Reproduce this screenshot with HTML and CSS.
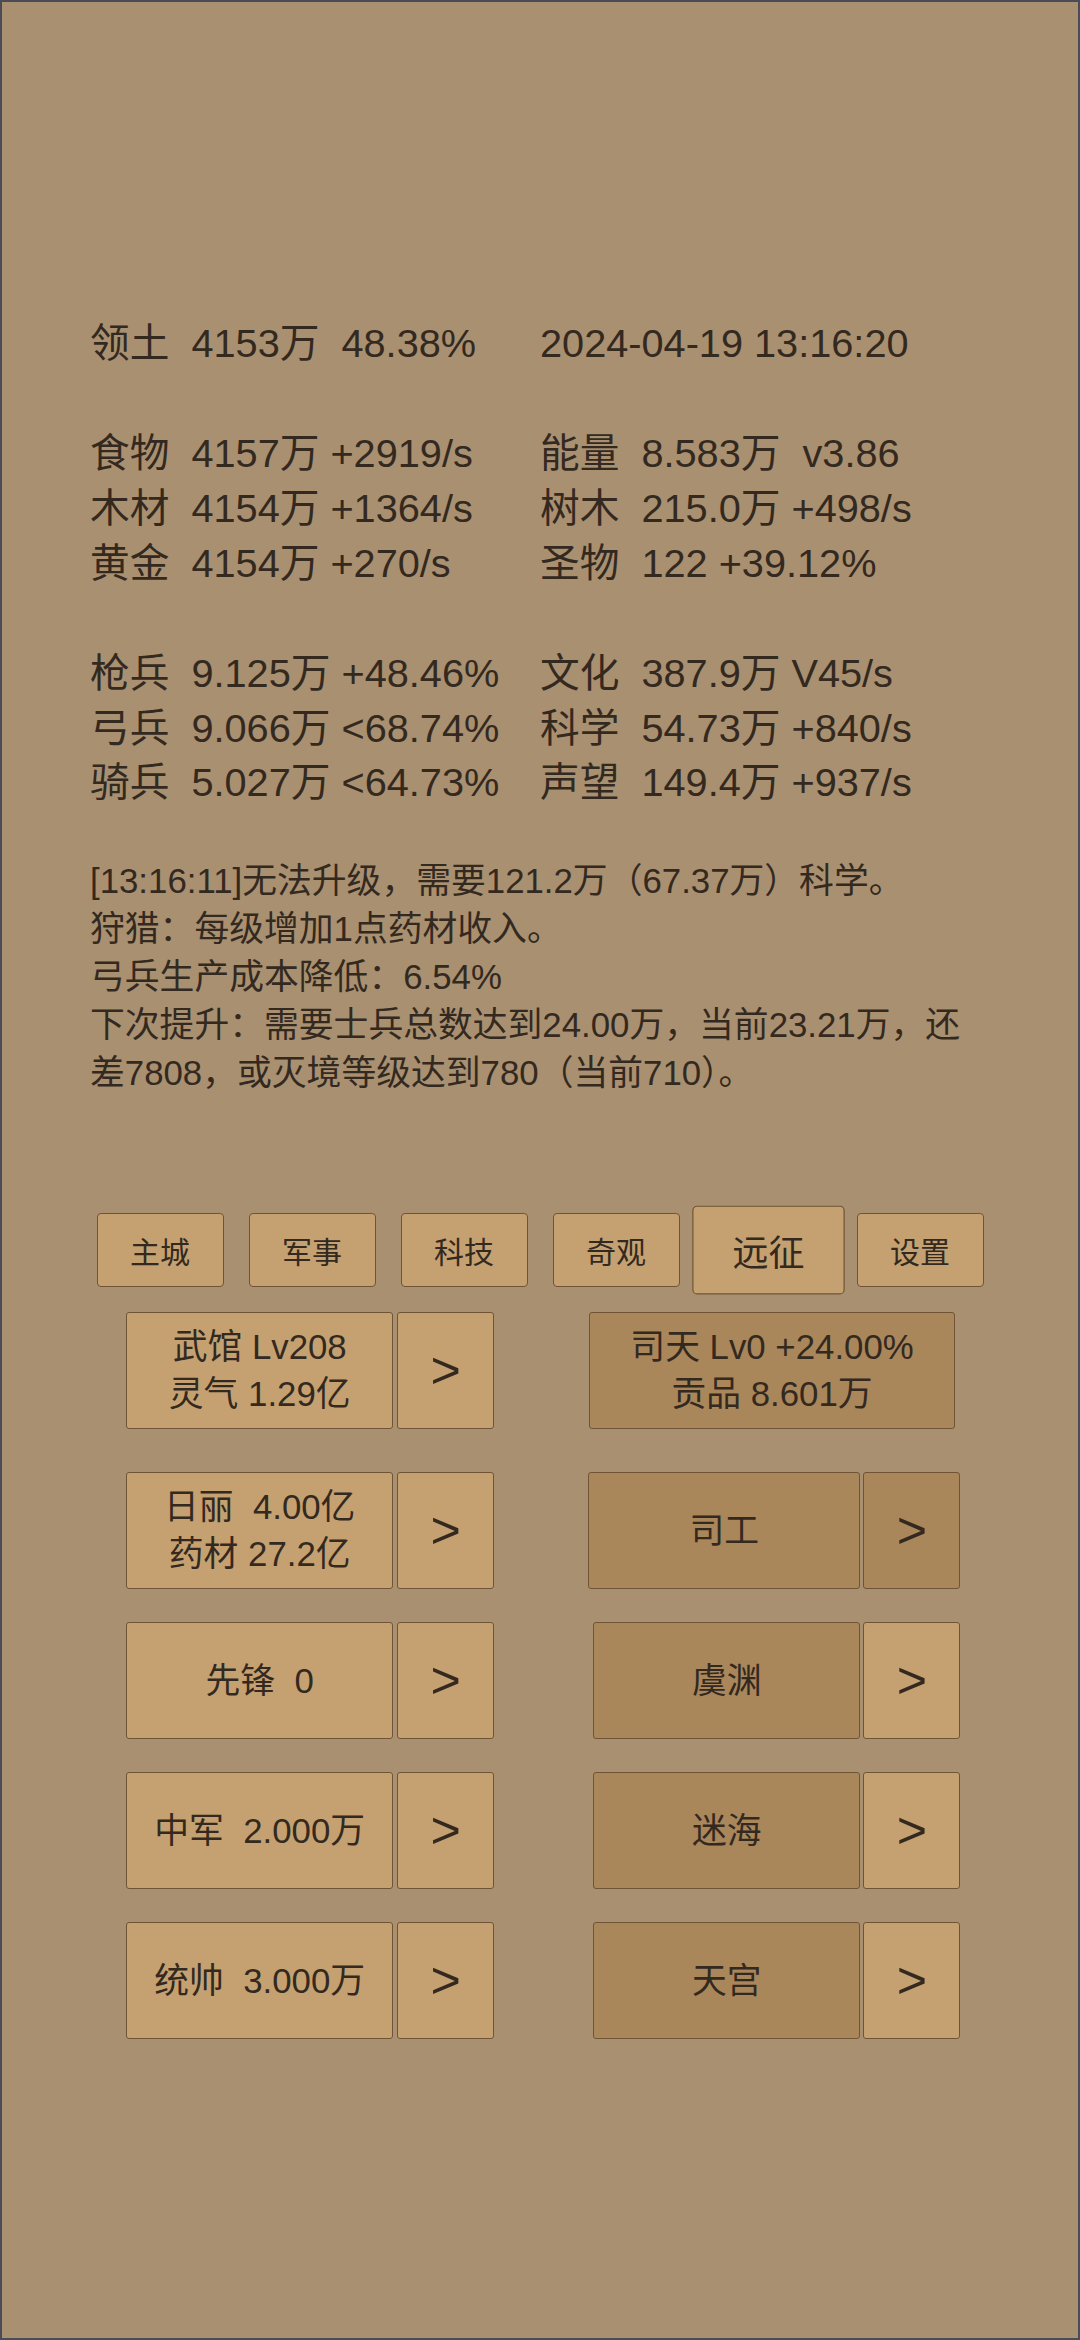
FILE: index.html
```html
<!DOCTYPE html>
<html lang="zh-CN">
<head>
    <meta charset="UTF-8">
    <meta name="viewport" content="width=device-width, initial-scale=1.0">
    <title>远征</title>
    <link rel="stylesheet" href="styles.css">
</head>
<body>
    <div class="page">
        <div class="stats">
            <div class="stat-group">
                <div class="cell">领土  4153万  48.38%</div>
                <div class="cell">2024-04-19 13:16:20</div>
            </div>
            <div class="stat-group">
                <div class="cell">食物  4157万 +2919/s</div>
                <div class="cell">能量  8.583万  v3.86</div>
                <div class="cell">木材  4154万 +1364/s</div>
                <div class="cell">树木  215.0万 +498/s</div>
                <div class="cell">黄金  4154万 +270/s</div>
                <div class="cell">圣物  122 +39.12%</div>
            </div>
            <div class="stat-group">
                <div class="cell">枪兵  9.125万 +48.46%</div>
                <div class="cell">文化  387.9万 V45/s</div>
                <div class="cell">弓兵  9.066万 &lt;68.74%</div>
                <div class="cell">科学  54.73万 +840/s</div>
                <div class="cell">骑兵  5.027万 &lt;64.73%</div>
                <div class="cell">声望  149.4万 +937/s</div>
            </div>
        </div>

        <div class="log">
            <div>[13:16:11]无法升级，需要121.2万（67.37万）科学。</div>
            <div>狩猎：每级增加1点药材收入。</div>
            <div>弓兵生产成本降低：6.54%</div>
            <div>下次提升：需要士兵总数达到24.00万，当前23.21万，还差7808，或灭境等级达到780（当前710）。</div>
        </div>

        <div class="tabs">
            <button class="tab">主城</button>
            <button class="tab">军事</button>
            <button class="tab">科技</button>
            <button class="tab">奇观</button>
            <button class="tab active">远征</button>
            <button class="tab">设置</button>
        </div>

        <div class="rows">
            <div class="row first">
                <div class="group">
                    <button class="btn main"><span>武馆 Lv208</span><span>灵气 1.29亿</span></button>
                    <button class="btn arrow">&gt;</button>
                </div>
                <div class="group right">
                    <button class="btn dark solo"><span>司天 Lv0 +24.00%</span><span>贡品 8.601万</span></button>
                </div>
            </div>
            <div class="row">
                <div class="group">
                    <button class="btn main"><span>日丽  4.00亿</span><span>药材 27.2亿</span></button>
                    <button class="btn arrow">&gt;</button>
                </div>
                <div class="group right">
                    <button class="btn main dark wide">司工</button>
                    <button class="btn arrow dark">&gt;</button>
                </div>
            </div>
            <div class="row">
                <div class="group">
                    <button class="btn main">先锋  0</button>
                    <button class="btn arrow">&gt;</button>
                </div>
                <div class="group right">
                    <button class="btn main dark">虞渊</button>
                    <button class="btn arrow">&gt;</button>
                </div>
            </div>
            <div class="row">
                <div class="group">
                    <button class="btn main">中军  2.000万</button>
                    <button class="btn arrow">&gt;</button>
                </div>
                <div class="group right">
                    <button class="btn main dark">迷海</button>
                    <button class="btn arrow">&gt;</button>
                </div>
            </div>
            <div class="row">
                <div class="group">
                    <button class="btn main">统帅  3.000万</button>
                    <button class="btn arrow">&gt;</button>
                </div>
                <div class="group right">
                    <button class="btn main dark">天宫</button>
                    <button class="btn arrow">&gt;</button>
                </div>
            </div>
        </div>
    </div>
</body>
</html>
```

FILE: styles.css
```css
* {
    box-sizing: border-box;
}

body {
    margin: 0;
    font-family: "Liberation Sans", "Noto Sans CJK SC", sans-serif;
    font-size: 34.8px;
    color: #33291f;
    background: #a99071;
}

.page {
    height: 2340px;
    border: 2px solid #4a4d55;
    padding: 314px 88px 0 88px;
    background: #a99071;
}

.stats {
    font-size: 39.7px;
    line-height: 54.7px;
}

.stat-group {
    display: grid;
    grid-template-columns: 450px 450px;
}

.stat-group + .stat-group {
    margin-top: 55.5px;
}

.cell {
    white-space: pre;
}

.log {
    margin-top: 47px;
    line-height: 47.9px;
}

.tabs {
    display: flex;
    justify-content: center;
    gap: 25px;
    margin: 117px -88px 0 -88px;
}

button {
    font-family: inherit;
    color: inherit;
    margin: 0;
    padding: 0;
    cursor: pointer;
}

.tab {
    width: 127px;
    height: 73.7px;
    font-size: 30px;
    background: #c5a171;
    border: 1px solid #6f5535;
    border-radius: 4px;
}

.tab.active {
    transform: scale(1.2);
}

.rows {
    margin-top: 25px;
}

.row {
    display: flex;
    justify-content: space-between;
    padding: 0 29.7px 0 36.2px;
    margin-bottom: 33.4px;
}

.row.first {
    margin-bottom: 43.4px;
}

.group {
    display: flex;
    gap: 4px;
}

.group.right {
    gap: 3px;
}

.btn {
    height: 116.6px;
    font-size: 34.8px;
    line-height: 47px;
    background: #c5a171;
    border: 1px solid #6f5535;
    border-radius: 3px;
    display: flex;
    flex-direction: column;
    align-items: center;
    justify-content: center;
    white-space: pre;
}

.btn.main {
    width: 267px;
}

.group.right .btn.main {
    width: 267px;
}

.group.right .btn.main.wide {
    width: 272px;
}

.btn.solo {
    width: 366.6px;
    margin-right: 5px;
}

.btn.arrow {
    width: 97px;
    font-size: 52px;
}

.btn.dark {
    background: #aa865b;
}
```
